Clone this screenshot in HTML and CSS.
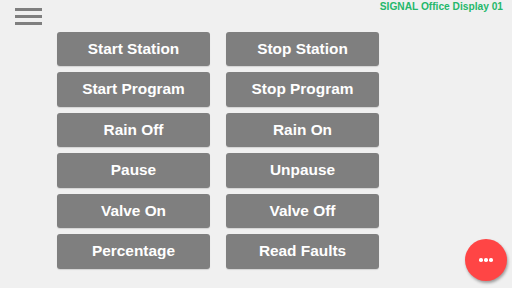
FILE: index.html
```html
<!DOCTYPE html>
<html>
<head>
<meta charset="utf-8">
<link rel="stylesheet" href="styles.css">
</head>
<body>
<div class="page">
  <header class="topbar">
    <div class="menu" aria-label="menu">
      <span class="bar"></span>
      <span class="bar"></span>
      <span class="bar"></span>
    </div>
    <div class="title">SIGNAL Office Display 01</div>
  </header>
  <main class="grid">
    <button class="btn">Start Station</button>
    <button class="btn">Stop Station</button>
    <button class="btn">Start Program</button>
    <button class="btn">Stop Program</button>
    <button class="btn">Rain Off</button>
    <button class="btn">Rain On</button>
    <button class="btn">Pause</button>
    <button class="btn">Unpause</button>
    <button class="btn">Valve On</button>
    <button class="btn">Valve Off</button>
    <button class="btn">Percentage</button>
    <button class="btn">Read Faults</button>
  </main>
  <button class="fab" aria-label="more"><span class="dot"></span><span class="dot"></span><span class="dot"></span></button>
</div>
</body>
</html>
```
FILE: styles.css
```css
html, body {
  margin: 0;
  padding: 0;
  background: #f0f0f0;
  width: 512px;
  height: 288px;
  overflow: hidden;
}
.page {
  position: relative;
  width: 512px;
  height: 288px;
  font-family: "Liberation Sans", Arial, sans-serif;
}
.topbar {
  display: flex;
  justify-content: space-between;
  align-items: flex-start;
  height: 31.5px;
}
.menu {
  display: flex;
  flex-direction: column;
  gap: 4px;
  margin: 8px 0 0 15px;
}
.bar {
  display: block;
  width: 27px;
  height: 3px;
  background: #7f7f7f;
}
.title {
  font-size: 10.2px;
  font-weight: bold;
  line-height: 12px;
  color: #25b86b;
  margin: 1px 9px 0 0;
}
.grid {
  display: grid;
  grid-template-columns: 153px 153px;
  grid-auto-rows: 34.5px;
  column-gap: 16px;
  row-gap: 6px;
  margin: 0 0 0 57px;
}
.btn {
  border: none;
  margin: 0;
  padding: 0;
  background: #7f7f7f;
  border-radius: 3px;
  color: #ffffff;
  font-family: "Liberation Sans", Arial, sans-serif;
  font-weight: bold;
  font-size: 15.4px;
  box-shadow: 0 1px 1px rgba(0,0,0,0.12);
}
.fab {
  position: absolute;
  left: 465px;
  top: 239px;
  width: 42px;
  height: 42px;
  border: none;
  padding: 0;
  border-radius: 50%;
  background: #ff4545;
  box-shadow: 1px 2px 3px rgba(0,0,0,0.35);
  display: flex;
  justify-content: center;
  align-items: center;
  gap: 1.5px;
}
.dot {
  width: 3.5px;
  height: 3.5px;
  border-radius: 50%;
  background: #ffffff;
}
```
